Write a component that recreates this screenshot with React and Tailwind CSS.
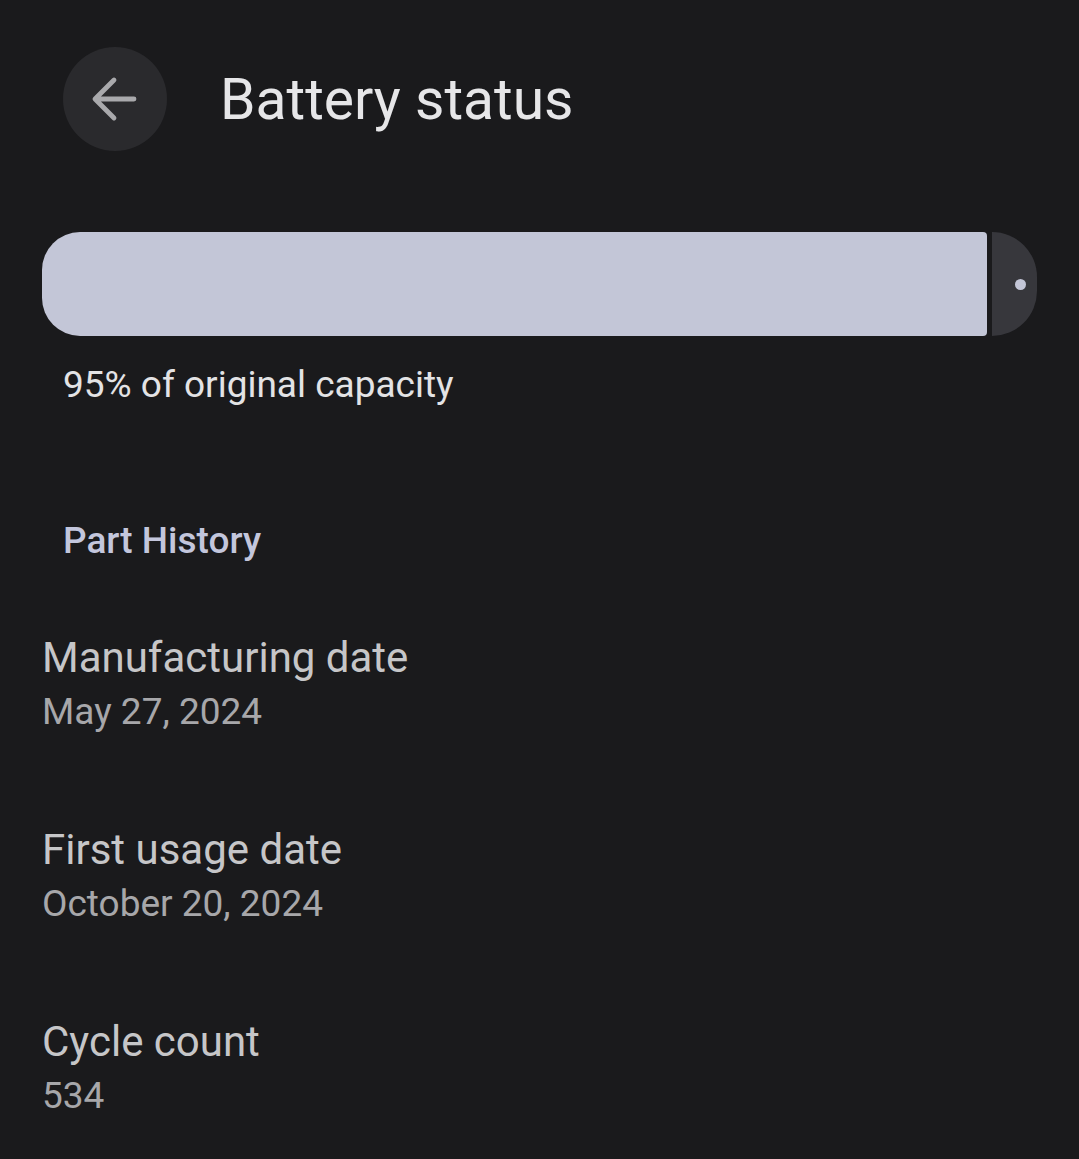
export default function App() {
  const rows = [
    { label: "Manufacturing date", value: "May 27, 2024" },
    { label: "First usage date", value: "October 20, 2024" },
    { label: "Cycle count", value: "534" },
  ];
  return (
    <div
      className="min-h-[1159px] w-full bg-[#1a1a1c] pt-[47px]"
      style={{ fontFamily: "Roboto, 'Noto Sans', sans-serif" }}
    >
      {/* Header */}
      <div className="flex items-center pl-[63px]">
        <button className="flex h-[104px] w-[104px] items-center justify-center rounded-full bg-[#2a2a2d]">
          <svg width="104" height="104" viewBox="0 0 104 104" fill="none">
            <path
              d="M71 52H33M51 33L32 52L51 71"
              stroke="#a9a9ac"
              strokeWidth="4.8"
              strokeLinecap="round"
              strokeLinejoin="round"
            />
          </svg>
        </button>
        <h1 className="ml-[53px] text-[57px] leading-none text-[#e6e6e8]">Battery status</h1>
      </div>

      {/* Battery bar */}
      <div className="mt-[81px] flex h-[104px] gap-[5px] px-[42px]">
        <div className="flex-1 rounded-l-[38px] rounded-r-[4px] bg-[#c3c6d7]" />
        <div className="flex w-[45px] items-center justify-end rounded-l-[4px] rounded-r-full bg-[#37373c] pr-[11px]">
          <div className="h-[11px] w-[11px] rounded-full bg-[#c3c6d7]" />
        </div>
      </div>

      <p className="mt-[30px] pl-[63px] text-[37px] leading-none text-[#e3e3e5]">
        95% of original capacity
      </p>

      <h2 className="mt-[119px] pl-[63px] text-[37px] font-medium leading-none text-[#c3c6dc]">
        Part History
      </h2>

      <div className="mt-[78px] flex flex-col gap-[99px] px-[42px]">
        {rows.map((r) => (
          <div key={r.label} className="flex flex-col">
            <div className="text-[42px] leading-none text-[#c6c6c8]">{r.label}</div>
            <div className="mt-[14px] text-[37px] leading-none text-[#a7a7aa]">{r.value}</div>
          </div>
        ))}
      </div>
    </div>
  );
}
